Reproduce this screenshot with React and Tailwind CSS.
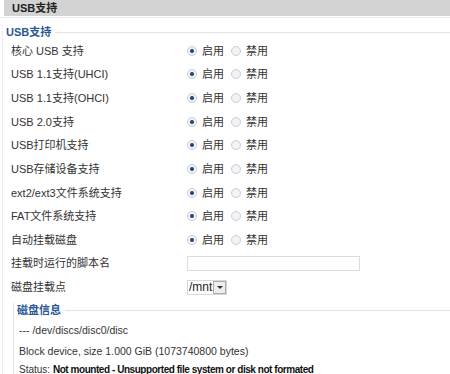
import React from "react";

const font = { fontFamily: '"Liberation Sans", "Noto Sans CJK SC", sans-serif' };

function Radio({ checked }) {
  return (
    <span className="relative inline-flex w-[10px] h-[10px] rounded-full border border-[#c8ccd4] bg-[#f1f3f6] items-center justify-center">
      {checked && <span className="w-[4px] h-[4px] rounded-full bg-[#1f3f73]" />}
    </span>
  );
}

function RadioRow({ label }) {
  return (
    <div className="flex items-center h-[23.67px]">
      <div className="w-[184px] pl-[8px]">{label}</div>
      <div className="flex items-center">
        <Radio checked />
        <span className="ml-[5px]">启用</span>
        <span className="ml-[7px] flex"><Radio /></span>
        <span className="ml-[5px]">禁用</span>
      </div>
    </div>
  );
}

export default function App() {
  const rows = [
    "核心 USB 支持",
    "USB 1.1支持(UHCI)",
    "USB 1.1支持(OHCI)",
    "USB 2.0支持",
    "USB打印机支持",
    "USB存储设备支持",
    "ext2/ext3文件系统支持",
    "FAT文件系统支持",
    "自动挂载磁盘",
  ];
  return (
    <div className="w-[450px] h-[374px] overflow-hidden bg-white text-[11px] text-[#333]" style={font}>
      <div className="ml-[4px] h-[16px] bg-[#d3d3d3] flex items-center pl-[8px] font-bold text-[11px] text-[#222]">
        USB支持
      </div>
      <div className="h-[1px] mt-[1px] bg-[#ececec]" />
      <div className="ml-[2px] mt-[7px] border-l border-[#ececec]">
        <div className="flex items-center h-[14px]">
          <span className="ml-[3px] font-bold text-[11px] text-[#2b5797]">USB支持</span>
          <div className="flex-1 ml-[4px] h-[1px] bg-[#e2e2e2]" />
        </div>
        <div>
          {rows.map((r) => (
            <RadioRow key={r} label={r} />
          ))}
          <div className="flex items-center h-[23.67px]">
            <div className="w-[184px] pl-[8px]">挂载时运行的脚本名</div>
            <div className="w-[173px] h-[15px] border border-[#dcdcdc] bg-white" />
          </div>
          <div className="flex items-center h-[23.67px]">
            <div className="w-[184px] pl-[8px]">磁盘挂载点</div>
            <div className="flex items-center h-[15px] border border-[#d8d8d8] bg-white pl-[1px]">
              <span className="text-[#222] text-[12px] leading-none">/mnt</span>
              <span className="ml-[1px] w-[13px] h-[13px] border border-[#aaa] bg-[#eee] flex items-center justify-center">
                <span className="w-0 h-0 border-l-[3px] border-r-[3px] border-t-[3px] border-l-transparent border-r-transparent border-t-[#333]" />
              </span>
            </div>
          </div>
          <div className="ml-[10px] mt-[4px] border-l border-[#e2e2e2]">
            <div className="flex items-center h-[14px]">
              <span className="ml-[3px] font-bold text-[11px] text-[#2b5797]">磁盘信息</span>
              <div className="flex-1 ml-[4px] h-[1px] bg-[#e2e2e2]" />
            </div>
            <div className="pl-[5px] pt-[3px]">
              <div className="h-[22px] flex items-center text-[10.5px]">--- /dev/discs/disc0/disc</div>
              <div className="h-[20px] flex items-center text-[10.5px]">Block device, size 1.000 GiB (1073740800 bytes)</div>
              <div className="h-[14px] flex items-center text-[10px] whitespace-nowrap">
                Status:&nbsp;<b className="text-[#111] tracking-[-0.45px]">Not mounted - Unsupported file system or disk not formated</b>
              </div>
            </div>
          </div>
        </div>
      </div>
    </div>
  );
}
